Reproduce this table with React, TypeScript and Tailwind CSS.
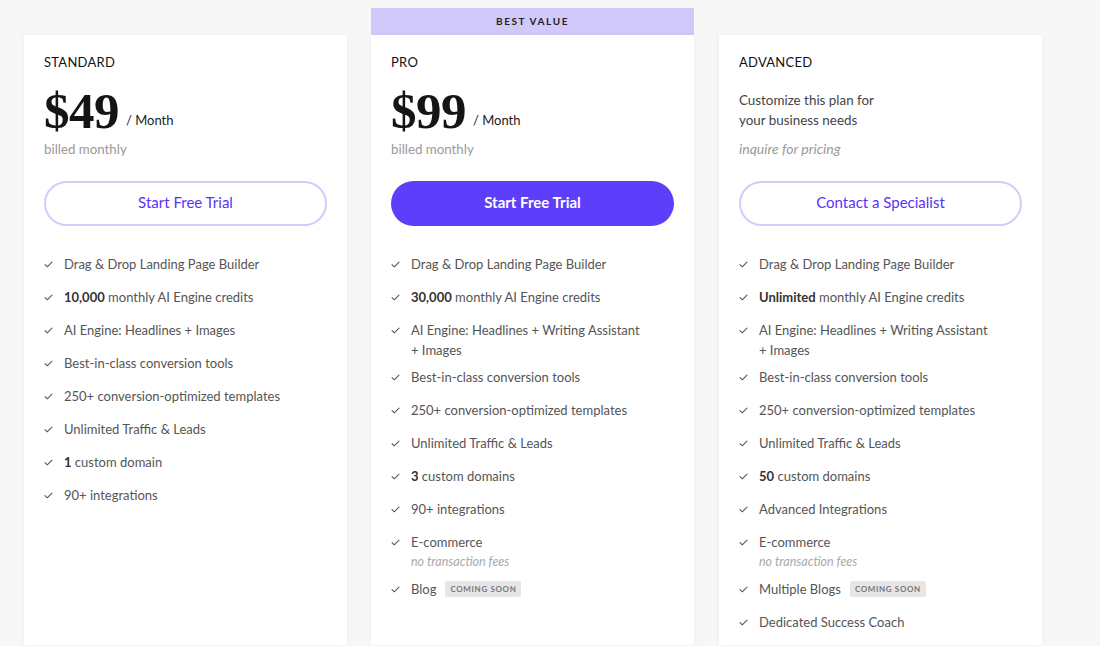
import React from "react";

// 料金プラン比較 — 3 カラム

type Feature = {
  bold?: string;
  text: string;
  note?: string;
  badge?: string;
};

type Plan = {
  name: string;
  price?: string;
  blurb?: string[];
  sub: string;
  subItalic?: boolean;
  cta: string;
  primary?: boolean;
  ribbon?: string;
  features: Feature[];
};

const PLANS: Plan[] = [
  {
    name: "STANDARD",
    price: "$49",
    sub: "billed monthly",
    cta: "Start Free Trial",
    features: [
      { text: "Drag & Drop Landing Page Builder" },
      { bold: "10,000", text: " monthly AI Engine credits" },
      { text: "AI Engine: Headlines + Images" },
      { text: "Best-in-class conversion tools" },
      { text: "250+ conversion-optimized templates" },
      { text: "Unlimited Traffic & Leads" },
      { bold: "1", text: " custom domain" },
      { text: "90+ integrations" },
    ],
  },
  {
    name: "PRO",
    price: "$99",
    sub: "billed monthly",
    cta: "Start Free Trial",
    primary: true,
    ribbon: "BEST VALUE",
    features: [
      { text: "Drag & Drop Landing Page Builder" },
      { bold: "30,000", text: " monthly AI Engine credits" },
      { text: "AI Engine: Headlines + Writing Assistant + Images" },
      { text: "Best-in-class conversion tools" },
      { text: "250+ conversion-optimized templates" },
      { text: "Unlimited Traffic & Leads" },
      { bold: "3", text: " custom domains" },
      { text: "90+ integrations" },
      { text: "E-commerce", note: "no transaction fees" },
      { text: "Blog", badge: "COMING SOON" },
    ],
  },
  {
    name: "ADVANCED",
    blurb: ["Customize this plan for", "your business needs"],
    sub: "inquire for pricing",
    subItalic: true,
    cta: "Contact a Specialist",
    features: [
      { text: "Drag & Drop Landing Page Builder" },
      { bold: "Unlimited", text: " monthly AI Engine credits" },
      { text: "AI Engine: Headlines + Writing Assistant + Images" },
      { text: "Best-in-class conversion tools" },
      { text: "250+ conversion-optimized templates" },
      { text: "Unlimited Traffic & Leads" },
      { bold: "50", text: " custom domains" },
      { text: "Advanced Integrations" },
      { text: "E-commerce", note: "no transaction fees" },
      { text: "Multiple Blogs", badge: "COMING SOON" },
      { text: "Dedicated Success Coach" },
    ],
  },
];

function Check() {
  return (
    <svg
      viewBox="0 0 10 8"
      className="mt-[7px] h-[7px] w-[9px] shrink-0 text-[#555]"
      fill="none"
      stroke="currentColor"
      strokeWidth="1.2"
      strokeLinecap="round"
      strokeLinejoin="round"
    >
      <path d="M1 4.2 L3.6 6.6 L9 1.2" />
    </svg>
  );
}

function FeatureRow({ f }: { f: Feature }) {
  return (
    <li className="flex min-h-[33px] gap-[11px] pb-[7px]">
      <Check />
      <div className="w-[232px]">
        <div className="flex items-center gap-[9px] text-[13px] leading-5 text-[#555]">
          <span>
            {f.bold && <span className="font-bold text-[#333]">{f.bold}</span>}
            {f.text}
          </span>
          {f.badge && (
            <span className="rounded-[2px] bg-[#e6e6e6] px-[5px] py-[2px] text-[8px] font-bold leading-[12px] tracking-[0.08em] text-[#777]">
              {f.badge}
            </span>
          )}
        </div>
        {f.note && (
          <div className="text-[12.5px] italic leading-5 text-[#aaa]">{f.note}</div>
        )}
      </div>
    </li>
  );
}

function PlanCard({ plan, extraLeft }: { plan: Plan; extraLeft?: boolean }) {
  return (
    <div className={"flex w-[323px] shrink-0 flex-col" + (extraLeft ? " ml-px" : "")}>
      {plan.ribbon ? (
        <div className="flex h-[27px] items-center justify-center bg-[#d1c9fa] text-[10px] font-bold tracking-[0.16em] text-[#222]">
          {plan.ribbon}
        </div>
      ) : (
        <div className="h-[27px]" />
      )}
      <div className="flex-1 bg-white px-5 pt-[17px] shadow-[0_0_6px_rgba(0,0,0,0.04)]">
        <div className="text-[13px] leading-5 tracking-[0.02em] text-[#111]">{plan.name}</div>

        {plan.price ? (
          <div className="mt-[10px] flex h-[58px] items-end">
            <span className="font-['Liberation_Serif',serif] text-[51px] font-bold leading-[58px] tracking-[-0.01em] text-[#151515]">
              {plan.price}
            </span>
            <span className="mb-[10px] ml-[7px] text-[13px] leading-5 text-[#222]">/ Month</span>
          </div>
        ) : (
          <div className="mt-[18px] h-[50px] text-[13.4px] leading-5 text-[#444]">
            {plan.blurb?.map((l) => <div key={l}>{l}</div>)}
          </div>
        )}

        <div
          className={
            "mt-[-1px] leading-5 text-[#999]" +
            (plan.subItalic ? " text-[14px] italic" : " text-[13.3px]")
          }
        >
          {plan.sub}
        </div>

        <button
          type="button"
          className={
            plan.primary
              ? "mt-[22px] flex h-[45px] w-[283px] items-center justify-center rounded-full bg-[#5c3efb] pb-[3px] text-[15px] font-bold text-white"
              : "mt-[22px] flex h-[45px] w-[283px] items-center justify-center rounded-full border-2 border-[#d4cbfb] bg-white pb-[3px] text-[15px] text-[#5a33f6]"
          }
        >
          {plan.cta}
        </button>

        <ul className="mt-[28px]">
          {plan.features.map((f, i) => (
            <FeatureRow key={i} f={f} />
          ))}
        </ul>
      </div>
    </div>
  );
}

export default function App() {
  return (
    <div className="h-[646px] overflow-hidden bg-[#f7f7f7] font-['Lato',sans-serif]">
      <div className="flex gap-6 pl-6 pt-2">
        {PLANS.map((p, i) => (
          <PlanCard key={p.name} plan={p} extraLeft={i === 2} />
        ))}
      </div>
    </div>
  );
}
